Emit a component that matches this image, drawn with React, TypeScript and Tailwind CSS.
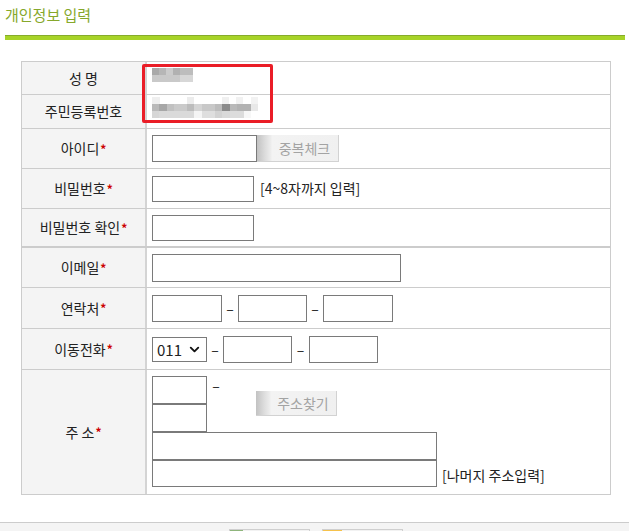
import { ChevronDown } from "lucide-react";
import type { ReactNode } from "react";

type Block = [number, string];

// pixelated (mosaic) blur of the hidden personal data
const nameRows: Block[][] = [
  [[7, "#a9a9a9"], [7, "#b6b6b6"], [7, "#cbcbcb"], [7, "#b1b1b1"], [13, "#bdbdbd"]],
  [[28, "#c9c9c9"], [13, "#d7d7d7"]],
];

const idRows: Block[][] = [
  [[8, "#efefef"], [27, "#ffffff"], [7, "#ececec"], [28, "#ffffff"], [7, "#f0f0f0"], [7, "#ffffff"], [7, "#f1f1f1"], [8, "#ffffff"], [7, "#f2f2f2"]],
  [[7, "#b9b9b9"], [8, "#a7a7a7"], [7, "#c1c1c1"], [13, "#cacaca"], [7, "#bcbcbc"], [8, "#d4d4d4"], [13, "#c8c8c8"], [7, "#bcbcbc"], [8, "#8b8b8b"], [7, "#b9b9b9"], [14, "#b2b2b2"], [7, "#e8e8e8"]],
  [[7, "#d6d6d6"], [35, "#dadada"], [8, "#f4f4f4"], [13, "#dedede"], [7, "#d2d2d2"], [8, "#d9d9d9"], [14, "#dcdcdc"], [7, "#f7f7f7"]],
];

function Mosaic({ rows, rowHeight }: { rows: Block[][]; rowHeight: number }) {
  return (
    <div className="flex flex-col">
      {rows.map((row, i) => (
        <div key={i} className="flex" style={{ height: rowHeight }}>
          {row.map(([w, c], j) => (
            <span key={j} style={{ width: w, background: c }} />
          ))}
        </div>
      ))}
    </div>
  );
}

function Star() {
  return <span className="ml-[1px] text-[12px] font-bold text-[#cc0000]">*</span>;
}

type RowProps = {
  label: string;
  required?: boolean;
  className: string;
  valueClass?: string;
  children?: ReactNode;
};

function Row({ label, required, className, valueClass, children }: RowProps) {
  return (
    <div className={`flex ${className}`}>
      <div className="flex w-[125px] shrink-0 items-center justify-center border-r-2 border-[#d4d4d4] bg-[#f4f4f4] text-[14px] text-[#222]">
        {label}
        {required && <Star />}
      </div>
      <div className={`flex flex-1 pl-[5px] ${valueClass ?? "items-center"}`}>{children}</div>
    </div>
  );
}

function Dash({ className }: { className: string }) {
  return <span className={`text-center text-[14px] text-[#222] ${className}`}>–</span>;
}

function ImgButton({ label, className }: { label: string; className: string }) {
  return (
    <button
      type="button"
      className={`flex items-center justify-center border-r border-b border-[#d2d2d2] bg-[linear-gradient(to_right,#c2c2c2_0px,#dcdcdc_8px,#ededed_14px,#f3f3f3_15px,#f0f0f0_100%)] pl-[14px] text-[14px] text-[#a3a3a3] ${className}`}
    >
      {label}
    </button>
  );
}

export default function App() {
  return (
    <div className="min-h-[531px] bg-white font-['Noto_Sans_CJK_KR','Liberation_Sans',sans-serif]">
      <h1 className="h-[35px] pl-[5px] pt-[5px] text-[15px] leading-[20px] text-[#86a82b]">개인정보 입력</h1>
      <div className="ml-[5px] h-[5px] w-[620px] border-t border-[#86ab2c] bg-[#a7d328]" />

      <div className="relative mt-[21px] ml-[21px] w-[590px] border border-[#cccccc]">
        <Row label="성 명" className="h-[33px] border-b border-[#cccccc]" valueClass="items-start pt-[6px]">
          <Mosaic rows={nameRows} rowHeight={7} />
        </Row>
        <Row label="주민등록번호" className="h-[34px] border-b border-[#cccccc]" valueClass="items-start pt-[2px]">
          <Mosaic rows={idRows} rowHeight={7} />
        </Row>
        <Row label="아이디" required className="h-[40px] border-b border-[#cccccc]">
          <input className="h-[27px] w-[105px] border border-[#7a7a7a] bg-white" />
          <ImgButton label="중복체크" className="h-[27px] w-[82px]" />
        </Row>
        <Row label="비밀번호" required className="h-[40px] border-b border-[#cccccc]">
          <input className="h-[26px] w-[102px] border border-[#7a7a7a] bg-white" />
          <span className="ml-[6px] text-[14px] text-[#222]">[4~8자까지 입력]</span>
        </Row>
        <Row label="비밀번호 확인" required className="h-[39px] border-b-2 border-[#cccccc]">
          <input className="h-[26px] w-[102px] border border-[#7a7a7a] bg-white" />
        </Row>
        <Row label="이메일" required className="h-[40px] border-b border-[#cccccc]">
          <input className="h-[28px] w-[249px] border border-[#7a7a7a] bg-white" />
        </Row>
        <Row label="연락처" required className="h-[41px] border-b border-[#cccccc]">
          <input className="h-[27px] w-[70px] border border-[#7a7a7a] bg-white" />
          <Dash className="w-[16px]" />
          <input className="h-[27px] w-[69px] border border-[#7a7a7a] bg-white" />
          <Dash className="w-[16px]" />
          <input className="h-[27px] w-[70px] border border-[#7a7a7a] bg-white" />
        </Row>
        <Row label="이동전화" required className="h-[41px] border-b border-[#cccccc]">
          <div className="relative h-[25px] w-[55px]">
            <select className="h-full w-full appearance-none border border-[#7a7a7a] bg-white pl-[4px] text-[15px] text-[#222]">
              <option>011</option>
            </select>
            <ChevronDown size={15} strokeWidth={3} className="pointer-events-none absolute top-[5px] right-[5px] text-[#111]" />
          </div>
          <Dash className="w-[16px]" />
          <input className="h-[27px] w-[69px] border border-[#7a7a7a] bg-white" />
          <Dash className="w-[17px]" />
          <input className="h-[27px] w-[69px] border border-[#7a7a7a] bg-white" />
        </Row>
        <Row label="주 소" required className="h-[124px]" valueClass="items-start pt-[6px]">
          <div className="flex flex-col">
            <div className="flex items-start">
              <div className="flex flex-col">
                <input className="h-[28px] w-[55px] border border-[#7a7a7a] bg-white" />
                <input className="h-[28px] w-[55px] border border-[#7a7a7a] bg-white" />
              </div>
              <Dash className="ml-[4px] w-[10px] leading-[18px]" />
              <ImgButton label="주소찾기" className="mt-[15px] ml-[35px] h-[25px] w-[81px]" />
            </div>
            <input className="h-[28px] w-[285px] border border-[#7a7a7a] bg-white" />
            <div className="flex items-end">
              <input className="h-[27px] w-[285px] border border-[#7a7a7a] bg-white" />
              <span className="ml-[5px] pb-[3px] text-[14px] leading-[17px] text-[#222]">[나머지 주소입력]</span>
            </div>
          </div>
        </Row>

        <div className="absolute top-[2px] left-[120px] h-[59px] w-[131px] rounded-[2px] border-[3px] border-[#ea1d27]" />
      </div>

      <div className="mt-[27px] flex h-[60px] gap-[12px] border-t border-[#cccccc] bg-[#f4f4f4] pt-[6px] pl-[229px]">
        <div className="flex h-[24px] w-[81px] border border-[#cfcfcf] bg-[#f2f2f2]">
          <span className="w-[13px] bg-[#8fb57c]" />
        </div>
        <div className="flex h-[24px] w-[81px] border border-[#cfcfcf] bg-[#f2f2f2]">
          <span className="w-[19px] bg-[#f6c24b]" />
        </div>
      </div>
    </div>
  );
}
